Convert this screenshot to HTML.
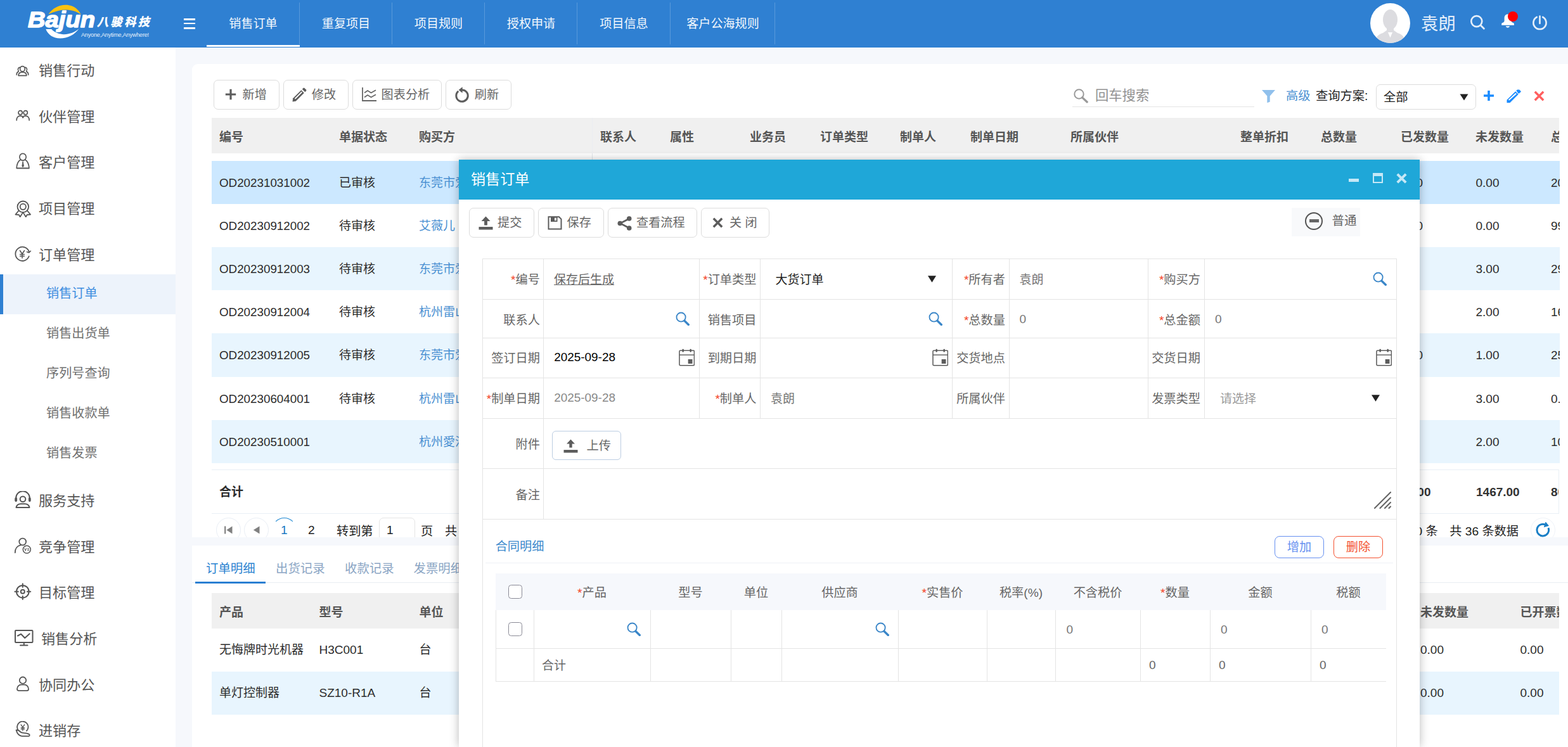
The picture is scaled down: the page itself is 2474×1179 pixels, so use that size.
<!DOCTYPE html>
<html lang="zh-CN"><head><meta charset="utf-8"><title>销售订单</title>
<style>
*{box-sizing:border-box;margin:0;padding:0}
html,body{width:2474px;height:1179px;overflow:hidden;background:#f6f8fc;font-family:"Liberation Sans","Noto Sans CJK SC",sans-serif;font-size:19.5px;color:#333}
.abs{position:absolute}
.t{position:absolute;white-space:nowrap;line-height:1}
#hdr{position:absolute;left:0;top:0;width:2474px;height:75px;background:#2f80d2}
#side{position:absolute;left:0;top:75px;width:277px;height:1104px;background:#fff}
.tab{position:absolute;top:0;height:75px;color:#f4f8fd;font-size:19.1px;line-height:76px;text-align:center}
.tab:after{content:"";position:absolute;right:0;top:4px;bottom:5px;width:1px;background:rgba(255,255,255,.2)}
.mi{position:absolute;left:61px;font-size:22.1px;color:#555;line-height:1;white-space:nowrap}
.si{position:absolute;left:73px;font-size:20.15px;color:#707070;line-height:1;white-space:nowrap}
.btn{position:absolute;border:1px solid #dcdcdc;border-radius:7px;background:#fff;color:#666;font-size:19.5px}
.card{position:absolute;background:#fff;border-radius:9px 0 0 0;overflow:hidden}
.th{position:absolute;font-weight:bold;color:#555;font-size:19px;white-space:nowrap;line-height:1}
.td{position:absolute;color:#2c2c2c;font-size:19px;white-space:nowrap;line-height:1}
.lnk{color:#4a90d2}
</style></head>
<body>
<div id="hdr">
<svg class="abs" style="left:40px;top:4px" width="120" height="62" viewBox="40 4 120 62">
<path d="M76.500 22.600C84 10.500 100 4.500 113.500 9.500c6.500 2.400 11.500 7.500 14.300 13.500C118 15.800 104 14 92 17c-6 1.500-11.500 3.500-15.500 5.600z" fill="#fdc20f"/>
<path d="M72.300 46c3.500 9 12 14.600 22.500 14.600 12 0 22.700-5.600 29.700-15-8 6.500-17.500 9.400-26.500 8.400-7.500-.8-13.500-4.200-16.700-8z" fill="#fff"/>
<text x="44" y="43" font-family="'Liberation Sans',sans-serif" font-weight="bold" font-style="italic" font-size="34.500" fill="#fff" stroke="#fff" stroke-width="1.5" stroke-linejoin="round" textLength="106" lengthAdjust="spacingAndGlyphs">Bajun</text>
</svg>
<div class="t" style="left:153px;top:25.500px;font-size:18px;font-weight:bold;font-style:italic;color:#fff;letter-spacing:3.600px;-webkit-text-stroke:0.5px #fff">八骏科技</div>
<div class="t" style="left:128px;top:50.500px;font-size:9.100px;color:#e6f0fb;letter-spacing:-0.200px">Anyone,Anytime,Anywhere!</div>
<div class="abs" style="left:289.500px;top:29.200px;width:18.500px;height:2.600px;background:#fff"></div>
<div class="abs" style="left:289.500px;top:35.900px;width:18.500px;height:2.600px;background:#fff"></div>
<div class="abs" style="left:289.500px;top:43.100px;width:18.500px;height:2.600px;background:#fff"></div>

<svg class="abs" style="left:2162px;top:5px" width="63" height="63" viewBox="0 0 63 63">
<defs><clipPath id="avc"><circle cx="31.500" cy="31.500" r="31.500"/></clipPath></defs>
<circle cx="31.500" cy="31.500" r="31.500" fill="#fff"/>
<g clip-path="url(#avc)" fill="#dcdce0">
<ellipse cx="31.500" cy="26" rx="11.500" ry="16"/>
<path d="M26 38h11v8H26z"/>
<path d="M8 63c0-9 4-13.500 12-16l6.500-4.500 5 12 5-12 6.500 4.500c8 2.500 12 7 12 16z"/>
</g>
</svg>
<div class="t" style="left:2242px;top:23.800px;font-size:27.400px;color:#e3eefa">袁朗</div>
<svg class="abs" style="left:2300px;top:10px" width="160" height="55" viewBox="0 0 160 55">
<g fill="none" stroke="#e4eefa" stroke-width="2.700" stroke-linecap="round">
<circle cx="29.800" cy="23.600" r="8.500"/><path d="M36 29.800l6.200 6.200" stroke-linecap="butt"/>
<path d="M134.24 16.98A10.1 10.1 0 1 1 124.76 16.98"/><path d="M129.500 15.600v11.400"/>
</g>
<path d="M79 12.600c-3.600 0-5.400 2.700-5.400 6.200v3.600c0 1.700-1.200 3-3 3.700-0.900 0.400-1.400 0.900-1.400 1.700v2h19.700v-2c0-0.800-0.500-1.300-1.400-1.700-1.800-0.700-3-2-3-3.700v-3.600c0-3.500-1.800-6.200-5.500-6.200z" fill="#fff"/>
<path d="M75.700 31.200a3.300 3.300 0 0 0 6.400 0z" fill="#fff"/>
<circle cx="87" cy="16" r="8" fill="#f00"/>
</svg>

<div class="tab" style="left:326px;width:147px">销售订单</div>
<div class="tab" style="left:473px;width:146px">重复项目</div>
<div class="tab" style="left:619px;width:146px">项目规则</div>
<div class="tab" style="left:765px;width:146px">授权申请</div>
<div class="tab" style="left:911px;width:147px">项目信息</div>
<div class="tab" style="left:1058px;width:165px">客户公海规则</div>
<div class="abs" style="left:326px;top:71px;width:147px;height:3px;background:#fff"></div>
</div>
<div id="side">
<div class="abs" style="left:0;top:358px;width:277px;height:63px;background:#edf3fb"></div>
<div class="abs" style="left:0;top:358px;width:5px;height:63px;background:#2f80d2"></div>
<div class="mi" style="left:61px;top:26.2px">销售行动</div>
<svg class="abs" style="left:24.8px;top:28.2px" width="20.93" height="17.46" viewBox="0 0 23 18" preserveAspectRatio="none" fill="none" stroke="#555" stroke-width="1.8" stroke-linecap="round" stroke-linejoin="round"><circle cx="11.5" cy="6" r="4.2"/><path d="M4.5 16.8c0-3.6 3-5.6 7-5.6s7 2 7 5.6z"/><path d="M7.3 3.6a3.4 3.4 0 0 0-2.6 5.8M4.6 10.2c-2 .8-3.3 2.6-3.3 5.2M15.7 3.6a3.4 3.4 0 0 1 2.6 5.8M18.4 10.2c2 .8 3.3 2.6 3.3 5.2"/></svg>
<div class="mi" style="left:61px;top:99.2px">伙伴管理</div>
<svg class="abs" style="left:24.6px;top:98.3px" width="22.32" height="18.24" viewBox="0 0 24 19" preserveAspectRatio="none" fill="none" stroke="#555" stroke-width="1.8" stroke-linecap="round" stroke-linejoin="round"><circle cx="7.6" cy="5" r="3.3"/><circle cx="16.4" cy="5" r="3.3"/><path d="M1.3 17.5c0-4.5 2.6-7.3 6.3-7.3 2.300 0 4 1 5 2.800"/><path d="M11.400 13c1-1.800 2.700-2.800 5-2.800 3.700 0 6.300 2.800 6.300 7.300"/></svg>
<div class="mi" style="left:61px;top:171.2px">客户管理</div>
<svg class="abs" style="left:24.9px;top:166.3px" width="22.08" height="26.46" viewBox="0 0 24 27" preserveAspectRatio="none" fill="none" stroke="#555" stroke-width="1.8" stroke-linecap="round" stroke-linejoin="round"><circle cx="12" cy="7" r="5.600"/><path d="M8 11.500C4 13.500 1.700 18 1.300 25h21.400c-.4-7-2.700-11.500-6.700-13.500"/><path d="M12 14.500l-1.300 7 1.300 1.800 1.300-1.800z" fill="#555" stroke-width="1"/></svg>
<div class="mi" style="left:61px;top:244.2px">项目管理</div>
<svg class="abs" style="left:22.5px;top:241px" width="27" height="27" viewBox="0 0 27 27" preserveAspectRatio="none" fill="none" stroke="#555" stroke-width="1.8" stroke-linecap="round" stroke-linejoin="round"><circle cx="13.3" cy="10.3" r="8.8"/><circle cx="13.3" cy="10.3" r="4.600"/><path d="M6.500 16.500L1.500 22.500l5.500.6 1.700 3.300 4-6.500M20 16.500l5 6-5.500.6-1.700 3.300-4-6.500"/></svg>
<div class="mi" style="left:61px;top:316.7px">订单管理</div>
<svg class="abs" style="left:22px;top:312.5px" width="28" height="26" viewBox="0 0 28 26" preserveAspectRatio="none" fill="none" stroke="#555" stroke-width="1.8" stroke-linecap="round" stroke-linejoin="round"><path d="M23.700 16.500A11 11 0 1 1 23.900 9.500"/><path d="M26.300 8.200l-2.500 2.500-3.300-1.200" stroke-width="1.600"/><path d="M9.500 7.500l3.500 5.200 3.500-5.200M13 12.700v6.500M9.700 13.500h6.600M9.700 16.200h6.600" stroke-width="1.600"/></svg>
<div class="mi" style="left:61px;top:704.7px">服务支持</div>
<svg class="abs" style="left:22px;top:699.5px" width="28" height="28" viewBox="0 0 28 28" preserveAspectRatio="none" fill="none" stroke="#555" stroke-width="1.8" stroke-linecap="round" stroke-linejoin="round"><path d="M3.200 13.500v-2.500a10.800 10.800 0 0 1 21.600 0v2.500" stroke-width="2"/><rect x="1.800" y="10.500" width="2.800" height="6" rx="1.200" fill="#555" stroke-width="1"/><rect x="23.400" y="10.500" width="2.800" height="6" rx="1.200" fill="#555" stroke-width="1"/><circle cx="14" cy="12.800" r="4.300" stroke-width="2"/><path d="M3.500 26c.7-3.800 3.600-5.800 7.500-5.800h6c3.900 0 6.800 2 7.500 5.800z" stroke-width="2"/></svg>
<div class="mi" style="left:61px;top:777.7px">竞争管理</div>
<svg class="abs" style="left:22px;top:773.3px" width="28" height="27" viewBox="0 0 28 27" preserveAspectRatio="none" fill="none" stroke="#555" stroke-width="1.8" stroke-linecap="round" stroke-linejoin="round"><circle cx="13.700" cy="7" r="5.400"/><path d="M1.800 24.300c0-6.300 3.400-11 8.800-12"/><circle cx="20.300" cy="19.300" r="6" fill="#fff" stroke-width="1.500"/><path d="M16.800 17.500l1.400 3.800 1.400-3.800M23.700 17.800c-.6-.5-2-.5-2.200.3-.3 1.300 2.300.9 2.200 2.200-.1.900-1.600.9-2.400.3" stroke-width="1"/></svg>
<div class="mi" style="left:61px;top:850.2px">目标管理</div>
<svg class="abs" style="left:22px;top:845px" width="28" height="28" viewBox="0 0 28 28" preserveAspectRatio="none" fill="none" stroke="#555" stroke-width="1.8" stroke-linecap="round" stroke-linejoin="round"><circle cx="13.800" cy="13.700" r="9.800" stroke-width="2"/><circle cx="13.800" cy="13.700" r="3" stroke-width="2"/><path d="M13.800 1.300v5.400M13.800 20.700v5.400M1.400 13.700h5.400M20.800 13.700h5.400" stroke-width="2"/></svg>
<div class="mi" style="left:65px;top:922.7px">销售分析</div>
<svg class="abs" style="left:22px;top:917.8px" width="32" height="28" viewBox="0 0 32 28" preserveAspectRatio="none" fill="none" stroke="#555" stroke-width="1.8" stroke-linecap="round" stroke-linejoin="round"><rect x="2" y="2" width="27.500" height="19" rx="1" stroke-width="2"/><path d="M15.800 21v4.500M10 25.500h11.500" stroke-width="2"/><path d="M6 10.500l5.200-2.800 6 6.300 7.500-6.800" stroke-width="2"/></svg>
<div class="mi" style="left:61px;top:995.7px">协同办公</div>
<svg class="abs" style="left:25px;top:992px" width="22" height="25" viewBox="0 0 22 25" preserveAspectRatio="none" fill="none" stroke="#555" stroke-width="1.8" stroke-linecap="round" stroke-linejoin="round"><circle cx="11" cy="6.700" r="5.200"/><path d="M2 20.500c0-4 3-6.800 6.500-6.800h5c3.500 0 6.500 2.800 6.500 6.800 0 1.600-1 2.600-2.500 2.600h-13c-1.500 0-2.500-1-2.500-2.600z"/></svg>
<div class="mi" style="left:61px;top:1068.2px">进销存</div>
<svg class="abs" style="left:24px;top:1063.3px" width="25" height="26" viewBox="0 0 25 26" preserveAspectRatio="none" fill="none" stroke="#555" stroke-width="1.8" stroke-linecap="round" stroke-linejoin="round"><path d="M4.300 13.800A8.700 8.700 0 1 1 18 15.500" stroke-width="1.800"/><path d="M9.200 5.800l2.700 4 2.700-4M11.900 9.800v5.200M9.300 10.700h5.200M9.300 12.900h5.200" stroke-width="1.400"/><path d="M1.500 14.300c1.500 5.500 4.500 9 9 9.500h11c1.400 0 1.800-2.300 0-3.200-2.500-1.200-5-1.800-7.500-1.800M1.500 14.300c3-.3 5.500 1.200 7 3.200 1.200 1 3 1.200 5.500 1.300" stroke-width="1.800"/></svg>
<div class="si" style="top:377.6px;color:#3f8ee0">销售订单</div>
<div class="si" style="top:440.6px">销售出货单</div>
<div class="si" style="top:503.6px">序列号查询</div>
<div class="si" style="top:566.6px">销售收款单</div>
<div class="si" style="top:629.6px">销售发票</div>
</div>
<div class="card" id="c1" style="left:303px;top:101px;width:2171px;height:747px">
<div class="btn" style="left:34px;top:25px;width:104px;height:47px"><svg class="abs" style="left:17px;top:13px" width="18" height="18" viewBox="0 0 18 18"><path d="M9 0.8v16.4M0.800 9h16.400" stroke="#5c5c5c" stroke-width="3.2" fill="none"/></svg><span class="t" style="left:44.6px;top:13px;font-size:19.15px">新增</span></div>
<div class="btn" style="left:144px;top:25px;width:103px;height:47px"><svg class="abs" style="left:12px;top:10px" width="25" height="25" viewBox="0 0 25 25"><path d="M1.500 23.500l0.700-5.200L15.300 5.200l4.500 4.500L6.700 22.800z" fill="#5c5c5c"/><path d="M4.800 18.200l10.800-10.800 1.300 1.300L6.100 19.500z" fill="#fff"/><path d="M16.800 3.700l1.700-1.700a1.300 1.300 0 0 1 1.900 0l2.600 2.600a1.300 1.300 0 0 1 0 1.900l-1.700 1.700z" fill="#5c5c5c"/></svg><span class="t" style="left:43.8px;top:13px;font-size:19.15px">修改</span></div>
<div class="btn" style="left:253px;top:25px;width:141px;height:47px"><svg class="abs" style="left:13px;top:10px" width="25" height="24" viewBox="0 0 25 24"><path d="M2 1v21h22" stroke="#666" stroke-width="1.800" fill="none"/><path d="M5 9.500l5-3.500 5.500 3.500 7.500-4.300" stroke="#666" stroke-width="1.600" fill="none"/><path d="M5 16.500l5-3.500 5.500 3.500 7.500-4.300" stroke="#666" stroke-width="1.600" fill="none"/></svg><span class="t" style="left:44.6px;top:13px;font-size:19.15px">图表分析</span></div>
<div class="btn" style="left:400px;top:25px;width:104px;height:47px"><svg class="abs" style="left:13px;top:10px" width="24" height="26" viewBox="0 0 24 26"><path d="M6.300 6.900A9.200 9.200 0 1 0 12 4.900" stroke="#5c5c5c" stroke-width="3" fill="none"/><path d="M12.600 0.300v9.400L6.600 5z" fill="#5c5c5c"/></svg><span class="t" style="left:44.8px;top:13px;font-size:19.15px">刷新</span></div>
<svg class="abs" style="left:1390px;top:37.5px" width="25" height="24" viewBox="0 0 25 24"><circle cx="9.500" cy="9.500" r="7.200" stroke="#999" stroke-width="2" fill="none"/><path d="M14.600 14.800l7.600 7.200" stroke="#999" stroke-width="3.200" stroke-linecap="round"/></svg>
<div class="t" style="left:1425px;top:40px;font-size:21.3px;color:#929292">回车搜索</div>
<div class="abs" style="left:1389px;top:67px;width:287px;height:1px;background:#e4e4e4"></div>
<svg class="abs" style="left:1687px;top:39.5px" width="23" height="22" viewBox="0 0 23 22"><path d="M1 1h21l-8.300 9.500v9.200l-4.400 1.600V10.500z" fill="#90c0ec"/></svg>
<div class="t" style="left:1726px;top:41.3px;font-size:19.3px;color:#4a90d2">高级</div>
<div class="t" style="left:1773px;top:41.3px;font-size:19.3px;color:#222">查询方案:</div>
<div class="abs" style="left:1868px;top:32px;width:158px;height:40px;border:1px solid #dcdcdc;border-radius:7px;background:#fff"><span class="t" style="left:11px;top:10px;font-size:19.3px;color:#222">全部</span><svg class="abs" style="left:130.500px;top:14px" width="14" height="11" viewBox="0 0 14 11"><path d="M0.500 0.500h13L7 10.500z" fill="#222"/></svg></div>
<svg class="abs" style="left:2038px;top:42px" width="16" height="16" viewBox="0 0 16 16"><path d="M8 0v16M0 8h16" stroke="#1b8cff" stroke-width="3.600" fill="none"/></svg>
<svg class="abs" style="left:2074px;top:39.5px" width="24" height="22" viewBox="0 0 24 22"><path d="M15.300 1.800L17.200 0.400h3l2.500 2.500v1.100L19.900 6.400l-1.500-0.200z" fill="#1b8cff"/><path d="M14.100 3.200l4.700 4.600L5.400 21.200H0.500v-4.400z" fill="#1b8cff"/><path d="M14.300 5.700l1.600 1.500L4.200 17.600l-1.400-1.200z" fill="#fff"/></svg>
<svg class="abs" style="left:2117px;top:41.5px" width="17" height="17" viewBox="0 0 17 17"><path d="M1.800 1.700l13.400 13.600M15.200 1.700L1.800 15.300" stroke="#ff5f5f" stroke-width="3.400" fill="none"/></svg>
<div class="abs" style="left:31px;top:85px;width:2126px;height:56px;background:#f0f0f0;overflow:hidden">
<span class="th" style="left:12px;top:20.5px">编号</span>
<span class="th" style="left:201px;top:20.5px">单据状态</span>
<span class="th" style="left:327px;top:20.5px">购买方</span>
<span class="th" style="left:613px;top:20.5px">联系人</span>
<span class="th" style="left:723px;top:20.5px">属性</span>
<span class="th" style="left:849px;top:20.5px">业务员</span>
<span class="th" style="left:960px;top:20.5px">订单类型</span>
<span class="th" style="left:1086px;top:20.5px">制单人</span>
<span class="th" style="left:1197px;top:20.5px">制单日期</span>
<span class="th" style="left:1355px;top:20.5px">所属伙伴</span>
<span class="th" style="left:1623px;top:20.5px">整单折扣</span>
<span class="th" style="left:1750px;top:20.5px">总数量</span>
<span class="th" style="left:1876px;top:20.5px">已发数量</span>
<span class="th" style="left:1994px;top:20.5px">未发数量</span>
<span class="th" style="left:2113px;top:20.5px">总金额</span>
</div>
<div class="abs" style="left:631px;top:141px;width:1px;height:500px;background:#e3e7ec"></div>
<div class="abs" style="left:631px;top:85px;width:1px;height:56px;background:#eaedf1"></div>
<div class="abs" style="left:31px;top:153px;width:2127px;height:68px;background:#cce8ff;overflow:hidden">
<span class="td" style="left:12px;top:25.5px;font-size:18.8px">OD20231031002</span>
<span class="td" style="left:201px;top:25.3px">已审核</span>
<span class="td lnk" style="left:327px;top:25.3px">东莞市爱车屋科技有限公司</span>
<span class="td" style="right:216px;top:25.3px">12.00</span>
<span class="td" style="left:1994.5px;top:25.3px">0.00</span>
<span class="td" style="left:2113px;top:25.3px">2000.00</span>
</div>
<div class="abs" style="left:31px;top:221px;width:2127px;height:68px;background:#fff;overflow:hidden">
<span class="td" style="left:12px;top:25.5px;font-size:18.8px">OD20230912002</span>
<span class="td" style="left:201px;top:25.3px">待审核</span>
<span class="td lnk" style="left:327px;top:25.3px">艾薇儿</span>
<span class="td" style="right:216px;top:25.3px">10.00</span>
<span class="td" style="left:1994.5px;top:25.3px">0.00</span>
<span class="td" style="left:2113px;top:25.3px">9900.00</span>
</div>
<div class="abs" style="left:31px;top:289px;width:2127px;height:68px;background:#e8f5fe;overflow:hidden">
<span class="td" style="left:12px;top:25.5px;font-size:18.8px">OD20230912003</span>
<span class="td" style="left:201px;top:25.3px">待审核</span>
<span class="td lnk" style="left:327px;top:25.3px">东莞市爱车屋科技有限公司</span>
<span class="td" style="left:1994.5px;top:25.3px">3.00</span>
<span class="td" style="left:2113px;top:25.3px">2900.00</span>
</div>
<div class="abs" style="left:31px;top:357px;width:2127px;height:68px;background:#fff;overflow:hidden">
<span class="td" style="left:12px;top:25.5px;font-size:18.8px">OD20230912004</span>
<span class="td" style="left:201px;top:25.3px">待审核</span>
<span class="td lnk" style="left:327px;top:25.3px">杭州雷山科技有限公司</span>
<span class="td" style="left:1994.5px;top:25.3px">2.00</span>
<span class="td" style="left:2113px;top:25.3px">1600.00</span>
</div>
<div class="abs" style="left:31px;top:425px;width:2127px;height:69px;background:#e8f5fe;overflow:hidden">
<span class="td" style="left:12px;top:25.5px;font-size:18.8px">OD20230912005</span>
<span class="td" style="left:201px;top:25.3px">待审核</span>
<span class="td lnk" style="left:327px;top:25.3px">东莞市爱车屋科技有限公司</span>
<span class="td" style="right:216px;top:25.3px">10.00</span>
<span class="td" style="left:1994.5px;top:25.3px">1.00</span>
<span class="td" style="left:2113px;top:25.3px">2500.00</span>
</div>
<div class="abs" style="left:31px;top:494px;width:2127px;height:68px;background:#fff;overflow:hidden">
<span class="td" style="left:12px;top:25.5px;font-size:18.8px">OD20230604001</span>
<span class="td" style="left:201px;top:25.3px">待审核</span>
<span class="td lnk" style="left:327px;top:25.3px">杭州雷山科技有限公司</span>
<span class="td" style="left:1994.5px;top:25.3px">3.00</span>
<span class="td" style="left:2113px;top:25.3px">0.00</span>
</div>
<div class="abs" style="left:31px;top:562px;width:2127px;height:68px;background:#e8f5fe;overflow:hidden">
<span class="td" style="left:12px;top:25.5px;font-size:18.8px">OD20230510001</span>
<span class="td lnk" style="left:327px;top:25.3px">杭州愛沙尼亚实业有限公司</span>
<span class="td" style="left:1994.5px;top:25.3px">2.00</span>
<span class="td" style="left:2113px;top:25.3px">1000.00</span>
</div>
<div class="abs" style="left:31px;top:640px;width:2126px;height:70px;border-top:1px solid #e9eff5;border-bottom:1px solid #e9eff5;border-right:1px solid #e9eff5;overflow:hidden">
<span class="td" style="left:12px;top:25.3px;font-weight:bold">合计</span>
<span class="td" style="right:201.5px;top:25.3px;font-weight:bold;color:#333">32.00</span>
<span class="td" style="left:1995px;top:25.3px;font-weight:bold;color:#333">1467.00</span>
<span class="td" style="left:2113px;top:25.3px;font-weight:bold;color:#333">80000.00</span>
</div>
<div class="abs" style="left:38.0px;top:715.5px;width:39px;height:39px;border:1px solid #e9eef5;border-radius:50%"><svg class="abs" style="left:12px;top:12px" width="13" height="13" viewBox="0 0 13 13"><path d="M1.2 0.5v12" stroke="#808080" stroke-width="2.2"/><path d="M12.5 0.5v12L3.5 6.5z" fill="#808080"/></svg></div>
<div class="abs" style="left:82.0px;top:715.5px;width:39px;height:39px;border:1px solid #e9eef5;border-radius:50%"><svg class="abs" style="left:13px;top:12px" width="11" height="13" viewBox="0 0 11 13"><path d="M10.5 0.5v12L0.8 6.5z" fill="#808080"/></svg></div>
<div class="abs" style="left:126px;top:715.5px;width:39px;height:39px;border-radius:50%;border:1.5px solid transparent;border-top-color:#1e88d2"></div>
<div class="t" style="left:140px;top:726.2px;font-size:19.2px;color:#1a78c2">1</div>
<div class="t" style="left:183px;top:726.2px;font-size:19.2px;color:#222">2</div>
<div class="t" style="left:228px;top:727.6px;font-size:19.2px;color:#222">转到第</div>
<div class="abs" style="left:295px;top:716px;width:57px;height:40px;border:1px solid #e4e4e4;border-radius:7px"><span class="t" style="left:11px;top:9.2px;font-size:19.2px;color:#222">1</span></div>
<div class="t" style="left:361px;top:727.6px;font-size:19.2px;color:#222">页</div>
<div class="t" style="left:399px;top:727.6px;font-size:19.2px;color:#222">共 2 页</div>
<div class="t" style="right:78px;top:727.6px;font-size:19.2px;color:#222">显示 1 - 20 条<span style="display:inline-block;width:18.5px"></span>共 36 条数据</div>
<div class="abs" style="left:2112px;top:715.5px;width:39px;height:39px;border:1px solid #eef2f8;border-radius:50%"><svg class="abs" style="left:7px;top:6px" width="24" height="25" viewBox="0 0 24 25"><path d="M19.92 9.12A9.3 9.3 0 1 1 14.78 3.98" stroke="#1a7fc6" stroke-width="3" fill="none"/><polygon points="15.60,-0.62 12.75,8.13 21.02,5.98" fill="#1a7fc6"/></svg></div>
</div>
<div class="card" id="c2" style="left:303px;top:861px;width:2171px;height:318px;border-radius:0">
<div class="t" style="left:22px;top:27.3px;font-size:19.4px;color:#2a82d0">订单明细</div>
<div class="t" style="left:132px;top:27.3px;font-size:19.4px;color:#8aa5c4">出货记录</div>
<div class="t" style="left:241px;top:27.3px;font-size:19.4px;color:#8aa5c4">收款记录</div>
<div class="t" style="left:349.5px;top:27.3px;font-size:19.4px;color:#8aa5c4">发票明细</div>
<div class="abs" style="left:0;top:58px;width:2171px;height:1px;background:#e8edf3"></div>
<div class="abs" style="left:5px;top:57px;width:111px;height:3px;background:#2a7fd2"></div>
<div class="abs" style="left:31px;top:75px;width:2126px;height:56px;background:#f0f0f0;overflow:hidden">
<span class="th" style="left:12px;top:20.8px">产品</span>
<span class="th" style="left:169.5px;top:20.8px">型号</span>
<span class="th" style="left:327.5px;top:20.8px">单位</span>
<span class="th" style="left:1907px;top:20.8px">未发数量</span>
<span class="th" style="left:2064.5px;top:20.8px">已开票数量</span>
</div>
<div class="abs" style="left:31px;top:131px;width:2126px;height:68px;background:#fff;overflow:hidden">
<span class="td" style="left:12px;top:24.4px">无悔牌时光机器</span>
<span class="td" style="left:169.5px;top:24.4px">H3C001</span>
<span class="td" style="left:327.5px;top:24.4px">台</span>
<span class="td" style="left:1907px;top:24.4px">0.00</span>
<span class="td" style="left:2064.5px;top:24.4px">0.00</span>
</div>
<div class="abs" style="left:31px;top:199px;width:2126px;height:68px;background:#e8f5fe;overflow:hidden">
<span class="td" style="left:12px;top:24.4px">单灯控制器</span>
<span class="td" style="left:169.5px;top:24.4px">SZ10-R1A</span>
<span class="td" style="left:327.5px;top:24.4px">台</span>
<span class="td" style="left:1907px;top:24.4px">0.00</span>
<span class="td" style="left:2064.5px;top:24.4px">0.00</span>
</div>
</div>
<div id="modal" class="abs" style="left:724px;top:252px;width:1516px;height:927px;background:#fff;box-shadow:0 0 14px rgba(0,0,0,.28)">
<div class="abs" style="left:0;top:0;width:1516px;height:63px;background:#1fa7d8"></div>
<div class="t" style="left:19px;top:20.1px;font-size:23.1px;color:#fff">销售订单</div>
<div class="abs" style="left:1404px;top:29.5px;width:16px;height:5px;background:#c5e8f6"></div>
<div class="abs" style="left:1441.5px;top:21px;width:16.5px;height:16px;border:2px solid #c5e8f6;border-top-width:5px"></div>
<svg class="abs" style="left:1479px;top:21px" width="17" height="17" viewBox="0 0 17 17"><path d="M1.8 1.8l13.4 13.4M15.2 1.8L1.8 15.2" stroke="#c5e8f6" stroke-width="4" fill="none"/></svg>
<div class="btn" style="left:16px;top:76px;width:103px;height:47px"><svg class="abs" style="left:14px;top:12px" width="23" height="22" viewBox="0 0 23 22"><path d="M11.5 0.5l7 7.5h-4.6v6.5h-4.8V8H4.5z" fill="#5c5c5c"/><rect x="0.5" y="17" width="22" height="4.5" fill="#5c5c5c"/></svg><span class="t" style="left:44px;top:13px;font-size:19.15px">提交</span></div>
<div class="btn" style="left:125px;top:76px;width:104px;height:47px"><svg class="abs" style="left:14px;top:12px" width="23" height="22" viewBox="0 0 23 22"><path d="M1.5 1.2h16.5l3.5 3.6v15.7h-20z" fill="none" stroke="#5c5c5c" stroke-width="2"/><rect x="5" y="1.5" width="10.5" height="7.5" fill="#5c5c5c"/><rect x="11" y="2.8" width="2.8" height="4.4" fill="#fff"/></svg><span class="t" style="left:44.6px;top:13px;font-size:19.15px">保存</span></div>
<div class="btn" style="left:235px;top:76px;width:141px;height:47px"><svg class="abs" style="left:14px;top:12px" width="23" height="23" viewBox="0 0 23 23"><path d="M19 4L4.5 11.5 19 19" stroke="#5c5c5c" stroke-width="2.6" fill="none"/><circle cx="18.7" cy="4" r="3.8" fill="#5c5c5c"/><circle cx="4.3" cy="11.5" r="3.8" fill="#5c5c5c"/><circle cx="18.7" cy="19" r="3.8" fill="#5c5c5c"/></svg><span class="t" style="left:44px;top:13px;font-size:19.15px">查看流程</span></div>
<div class="btn" style="left:382px;top:76px;width:108px;height:47px"><svg class="abs" style="left:17px;top:14px" width="17" height="17" viewBox="0 0 17 17"><path d="M1.8 1.8l13.4 13.4M15.2 1.8L1.8 15.2" stroke="#5c5c5c" stroke-width="3.4" fill="none"/></svg><span class="t" style="left:44px;top:13px;font-size:19.15px">关 闭</span></div>
<div class="abs" style="left:1314px;top:76px;width:108px;height:45px;background:#f8f9fb"><div class="abs" style="left:21px;top:6.5px;width:28px;height:28px;border:2px solid #555;border-radius:50%"></div><div class="abs" style="left:27.5px;top:18px;width:15.5px;height:5px;background:#666"></div><span class="t" style="left:63.5px;top:11px;color:#666">普通</span></div>
<div class="abs" style="left:37px;top:156px;width:1px;height:780px;background:#e4e4e4"></div>
<div class="abs" style="left:1479px;top:156px;width:1px;height:780px;background:#e4e4e4"></div>
<div class="abs" style="left:37px;top:156px;width:1443px;height:1px;background:#e4e4e4"></div>
<div class="abs" style="left:37px;top:220px;width:1443px;height:1px;background:#e4e4e4"></div>
<div class="abs" style="left:37px;top:281px;width:1443px;height:1px;background:#e4e4e4"></div>
<div class="abs" style="left:37px;top:344px;width:1443px;height:1px;background:#e4e4e4"></div>
<div class="abs" style="left:37px;top:408px;width:1443px;height:1px;background:#e4e4e4"></div>
<div class="abs" style="left:37px;top:487px;width:1443px;height:1px;background:#e4e4e4"></div>
<div class="abs" style="left:37px;top:567px;width:1443px;height:1px;background:#e4e4e4"></div>
<div class="abs" style="left:133px;top:156px;width:1px;height:411px;background:#e4e4e4"></div>
<div class="abs" style="left:379px;top:156px;width:1px;height:252px;background:#e4e4e4"></div>
<div class="abs" style="left:475px;top:156px;width:1px;height:252px;background:#e4e4e4"></div>
<div class="abs" style="left:778px;top:156px;width:1px;height:252px;background:#e4e4e4"></div>
<div class="abs" style="left:868px;top:156px;width:1px;height:252px;background:#e4e4e4"></div>
<div class="abs" style="left:1087px;top:156px;width:1px;height:252px;background:#e4e4e4"></div>
<div class="abs" style="left:1176px;top:156px;width:1px;height:252px;background:#e4e4e4"></div>
<div class="t" style="right:1388.1px;top:179.8px;color:#666;font-size:19.2px"><span style="color:#f4431f">*</span>编号</div>
<div class="t" style="left:150px;top:179.9px;color:#666;font-size:19px;text-decoration:underline">保存后生成</div>
<div class="t" style="right:1046.6px;top:179.8px;color:#666;font-size:19.2px"><span style="color:#f4431f">*</span>订单类型</div>
<div class="t" style="left:499.5px;top:179.9px;color:#222;font-size:19px;">大货订单</div>
<svg class="abs" style="left:740px;top:183px" width="13" height="11" viewBox="0 0 13 11"><path d="M0 0.3h13L6.5 10.7z" fill="#222"/></svg>
<div class="t" style="right:654.1px;top:179.8px;color:#666;font-size:19.2px"><span style="color:#f4431f">*</span>所有者</div>
<div class="t" style="left:884.5px;top:179.9px;color:#777;font-size:19px;">袁朗</div>
<div class="t" style="right:346.1px;top:179.8px;color:#666;font-size:19.2px"><span style="color:#f4431f">*</span>购买方</div>
<svg class="abs" style="left:1441.5px;top:176.5px" width="22.4" height="22.4" viewBox="0 0 23 23"><circle cx="8.8" cy="8.8" r="7.3" stroke="#3a86c8" stroke-width="1.9" fill="none"/><path d="M14.3 14.6l6.6 6.4" stroke="#3a86c8" stroke-width="3.4" stroke-linecap="round"/></svg>
<div class="t" style="right:1388.1px;top:243.5px;color:#666;font-size:19.2px">联系人</div>
<svg class="abs" style="left:341.5px;top:239.5px" width="22.4" height="22.4" viewBox="0 0 23 23"><circle cx="8.8" cy="8.8" r="7.3" stroke="#3a86c8" stroke-width="1.9" fill="none"/><path d="M14.3 14.6l6.6 6.4" stroke="#3a86c8" stroke-width="3.4" stroke-linecap="round"/></svg>
<div class="t" style="right:1046.6px;top:243.5px;color:#666;font-size:19.2px">销售项目</div>
<svg class="abs" style="left:741px;top:239.5px" width="22.4" height="22.4" viewBox="0 0 23 23"><circle cx="8.8" cy="8.8" r="7.3" stroke="#3a86c8" stroke-width="1.9" fill="none"/><path d="M14.3 14.6l6.6 6.4" stroke="#3a86c8" stroke-width="3.4" stroke-linecap="round"/></svg>
<div class="t" style="right:654.1px;top:243.5px;color:#666;font-size:19.2px"><span style="color:#f4431f">*</span>总数量</div>
<div class="t" style="left:884.5px;top:241.6px;color:#777;font-size:19px;">0</div>
<div class="t" style="right:346.1px;top:243.5px;color:#666;font-size:19.2px"><span style="color:#f4431f">*</span>总金额</div>
<div class="t" style="left:1193px;top:241.6px;color:#777;font-size:19px;">0</div>
<div class="t" style="right:1388.1px;top:304.3px;color:#666;font-size:19.2px">签订日期</div>
<div class="t" style="left:150.3px;top:303.4px;color:#000;font-size:19px;font-size:18.9px">2025-09-28</div>
<svg class="abs" style="left:346.5px;top:298px" width="25.4" height="28" viewBox="0 0 26 28" preserveAspectRatio="none"><rect x="1" y="3.2" width="24" height="23.6" rx="1.5" fill="#fff" stroke="#5c5c5c" stroke-width="1.6"/><path d="M1 10.2h24" stroke="#5c5c5c" stroke-width="1.4"/><rect x="5.5" y="0.8" width="2.6" height="5" rx="1.2" fill="#5c5c5c"/><rect x="17.8" y="0.8" width="2.6" height="5" rx="1.2" fill="#5c5c5c"/><rect x="15" y="17" width="7" height="7" fill="#5c5c5c"/></svg>
<div class="t" style="right:1046.6px;top:304.3px;color:#666;font-size:19.2px">到期日期</div>
<svg class="abs" style="left:746.5px;top:298px" width="25.4" height="28" viewBox="0 0 26 28" preserveAspectRatio="none"><rect x="1" y="3.2" width="24" height="23.6" rx="1.5" fill="#fff" stroke="#5c5c5c" stroke-width="1.6"/><path d="M1 10.2h24" stroke="#5c5c5c" stroke-width="1.4"/><rect x="5.5" y="0.8" width="2.6" height="5" rx="1.2" fill="#5c5c5c"/><rect x="17.8" y="0.8" width="2.6" height="5" rx="1.2" fill="#5c5c5c"/><rect x="15" y="17" width="7" height="7" fill="#5c5c5c"/></svg>
<div class="t" style="right:654.1px;top:304.3px;color:#666;font-size:19.2px">交货地点</div>
<div class="t" style="right:346.1px;top:304.3px;color:#666;font-size:19.2px">交货日期</div>
<svg class="abs" style="left:1446.5px;top:298px" width="25.4" height="28" viewBox="0 0 26 28" preserveAspectRatio="none"><rect x="1" y="3.2" width="24" height="23.6" rx="1.5" fill="#fff" stroke="#5c5c5c" stroke-width="1.6"/><path d="M1 10.2h24" stroke="#5c5c5c" stroke-width="1.4"/><rect x="5.5" y="0.8" width="2.6" height="5" rx="1.2" fill="#5c5c5c"/><rect x="17.8" y="0.8" width="2.6" height="5" rx="1.2" fill="#5c5c5c"/><rect x="15" y="17" width="7" height="7" fill="#5c5c5c"/></svg>
<div class="t" style="right:1388.1px;top:367.8px;color:#666;font-size:19.2px"><span style="color:#f4431f">*</span>制单日期</div>
<div class="t" style="left:150.3px;top:366.9px;color:#888;font-size:19px;font-size:18.9px">2025-09-28</div>
<div class="t" style="right:1046.6px;top:367.8px;color:#666;font-size:19.2px"><span style="color:#f4431f">*</span>制单人</div>
<div class="t" style="left:492px;top:367.9px;color:#777;font-size:19px;">袁朗</div>
<div class="t" style="right:654.1px;top:367.8px;color:#666;font-size:19.2px">所属伙伴</div>
<div class="t" style="right:346.1px;top:367.8px;color:#666;font-size:19.2px">发票类型</div>
<div class="t" style="left:1201px;top:367.9px;color:#999;font-size:19px;">请选择</div>
<svg class="abs" style="left:1440px;top:370.5px" width="13" height="11" viewBox="0 0 13 11"><path d="M0 0.3h13L6.5 10.7z" fill="#222"/></svg>
<div class="t" style="right:1388.1px;top:440.3px;color:#666;font-size:19.2px">附件</div>
<div class="abs" style="left:147px;top:428px;width:109px;height:46px;border:1px solid #bccde2;border-radius:6px;background:#fff"><svg class="abs" style="left:17px;top:12px" width="23" height="22" viewBox="0 0 23 22"><path d="M11.5 0.5l6.5 7h-4.3v6h-4.4v-6H5z" fill="#5c5c5c"/><rect x="0.5" y="17" width="22" height="4.5" fill="#5c5c5c"/></svg><span class="t" style="left:53.5px;top:13px;color:#666;font-size:19.2px">上传</span></div>
<div class="t" style="right:1388.1px;top:519.5px;color:#666;font-size:19.2px">备注</div>
<svg class="abs" style="left:1444px;top:524px" width="28" height="27" viewBox="0 0 28 27"><path d="M1 26L26 1M9.5 26L26 9.5M17 26L26 17M23.5 26L26 23.5" stroke="#666" stroke-width="2.1" stroke-linecap="round" fill="none"/></svg>
<div class="t" style="left:57.7px;top:601.3px;font-size:19.2px;color:#3a88cc">合同明细</div>
<div class="abs" style="left:1287px;top:594px;width:78px;height:35px;border:1px solid #6690f0;border-radius:8px;background:#fff;color:#6690f0;font-size:19.2px;line-height:34.4px;text-align:center">增加</div>
<div class="abs" style="left:1380px;top:594px;width:78px;height:35px;border:1px solid #f4512f;border-radius:8px;background:#fff;color:#f4512f;font-size:19.2px;line-height:34.4px;text-align:center">删除</div>
<div class="abs" style="left:42px;top:636px;width:1432px;height:1px;background:#eef1f5"></div>
<div class="abs" style="left:58px;top:653px;width:1405px;height:58px;background:#f6f8fc"></div>
<div class="abs" style="left:58px;top:771px;width:1405px;height:1px;background:#e4e4e4"></div>
<div class="abs" style="left:58px;top:823px;width:1405px;height:1px;background:#e4e4e4"></div>
<div class="abs" style="left:58px;top:711px;width:1px;height:113px;background:#e4e4e4"></div>
<div class="abs" style="left:118px;top:711px;width:1px;height:113px;background:#e4e4e4"></div>
<div class="abs" style="left:302px;top:711px;width:1px;height:113px;background:#e4e4e4"></div>
<div class="abs" style="left:429px;top:711px;width:1px;height:113px;background:#e4e4e4"></div>
<div class="abs" style="left:509px;top:711px;width:1px;height:113px;background:#e4e4e4"></div>
<div class="abs" style="left:693px;top:711px;width:1px;height:113px;background:#e4e4e4"></div>
<div class="abs" style="left:833px;top:711px;width:1px;height:113px;background:#e4e4e4"></div>
<div class="abs" style="left:941px;top:711px;width:1px;height:113px;background:#e4e4e4"></div>
<div class="abs" style="left:1075px;top:711px;width:1px;height:113px;background:#e4e4e4"></div>
<div class="abs" style="left:1185px;top:711px;width:1px;height:113px;background:#e4e4e4"></div>
<div class="abs" style="left:1344px;top:711px;width:1px;height:113px;background:#e4e4e4"></div>
<div class="abs" style="left:118px;top:653px;width:184px;height:58px;line-height:62px;text-align:center;color:#666;font-size:19.2px;white-space:nowrap"><span style="color:#f4431f">*</span>产品</div>
<div class="abs" style="left:302px;top:653px;width:127px;height:58px;line-height:62px;text-align:center;color:#666;font-size:19.2px;white-space:nowrap">型号</div>
<div class="abs" style="left:429px;top:653px;width:80px;height:58px;line-height:62px;text-align:center;color:#666;font-size:19.2px;white-space:nowrap">单位</div>
<div class="abs" style="left:509px;top:653px;width:184px;height:58px;line-height:62px;text-align:center;color:#666;font-size:19.2px;white-space:nowrap">供应商</div>
<div class="abs" style="left:693px;top:653px;width:140px;height:58px;line-height:62px;text-align:center;color:#666;font-size:19.2px;white-space:nowrap"><span style="color:#f4431f">*</span>实售价</div>
<div class="abs" style="left:833px;top:653px;width:108px;height:58px;line-height:62px;text-align:center;color:#666;font-size:19.2px;white-space:nowrap">税率(%)</div>
<div class="abs" style="left:941px;top:653px;width:134px;height:58px;line-height:62px;text-align:center;color:#666;font-size:19.2px;white-space:nowrap">不含税价</div>
<div class="abs" style="left:1075px;top:653px;width:110px;height:58px;line-height:62px;text-align:center;color:#666;font-size:19.2px;white-space:nowrap"><span style="color:#f4431f">*</span>数量</div>
<div class="abs" style="left:1185px;top:653px;width:159px;height:58px;line-height:62px;text-align:center;color:#666;font-size:19.2px;white-space:nowrap">金额</div>
<div class="abs" style="left:1344px;top:653px;width:119px;height:58px;line-height:62px;text-align:center;color:#666;font-size:19.2px;white-space:nowrap">税额</div>
<div class="abs" style="left:78px;top:671px;width:22px;height:22px;border:1px solid #8a8a96;border-radius:4.5px;background:#fff"></div>
<div class="abs" style="left:78px;top:730px;width:22px;height:22px;border:1px solid #8a8a96;border-radius:4.5px;background:#fff"></div>
<svg class="abs" style="left:265px;top:730px" width="22.4" height="22.4" viewBox="0 0 23 23"><circle cx="8.8" cy="8.8" r="7.3" stroke="#3a86c8" stroke-width="1.9" fill="none"/><path d="M14.3 14.6l6.6 6.4" stroke="#3a86c8" stroke-width="3.4" stroke-linecap="round"/></svg>
<svg class="abs" style="left:657px;top:730px" width="22.4" height="22.4" viewBox="0 0 23 23"><circle cx="8.8" cy="8.8" r="7.3" stroke="#3a86c8" stroke-width="1.9" fill="none"/><path d="M14.3 14.6l6.6 6.4" stroke="#3a86c8" stroke-width="3.4" stroke-linecap="round"/></svg>
<div class="t" style="left:958.5px;top:732.4px;color:#777;font-size:19px;">0</div>
<div class="t" style="left:1202px;top:732.4px;color:#777;font-size:19px;">0</div>
<div class="t" style="left:1361px;top:732.4px;color:#777;font-size:19px;">0</div>
<div class="t" style="left:131px;top:789.4px;color:#666;font-size:19px;">合计</div>
<div class="t" style="left:1089px;top:788.4px;color:#666;font-size:19px;">0</div>
<div class="t" style="left:1199px;top:788.4px;color:#666;font-size:19px;">0</div>
<div class="t" style="left:1358px;top:788.4px;color:#666;font-size:19px;">0</div>
</div>
</body></html>
